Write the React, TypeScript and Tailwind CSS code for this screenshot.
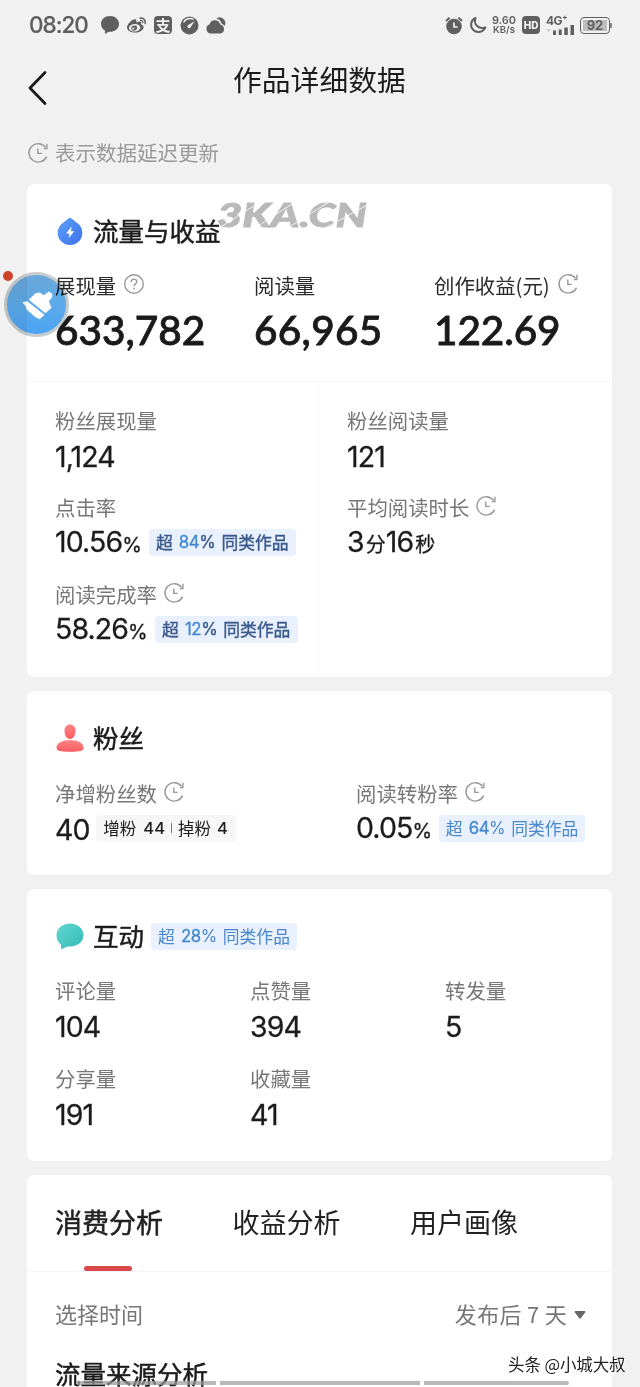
import type { ReactNode } from "react";
import { FaWeibo } from "react-icons/fa";

type Metric = {
  label: string;
  value: ReactNode;
  delayed?: boolean;
  extra?: ReactNode;
};

function DelayIcon({ className = "text-[#999]" }: { className?: string }) {
  return (
    <svg width="22" height="22" viewBox="0 0 22 22" fill="none" stroke="currentColor" strokeWidth="1.4" className={`shrink-0 ${className}`}>
      <path d="M19.6 14.6A9.2 9.2 0 1 1 18.6 5.4" />
      <path d="M19.9 1.800V6.600H16.800" />
      <path d="M10.8 6.6V11.4H14.8" />
    </svg>
  );
}

function HelpIcon() {
  return (
    <svg width="22" height="22" viewBox="0 0 22 22" fill="none" stroke="#999" strokeWidth="1.4" className="shrink-0">
      <circle cx="11" cy="11" r="9.3" />
      <path d="M8.2 8.9C8.2 5.2 13.8 5.3 13.8 8.7C13.8 10.8 11 10.9 11 13.2" />
      <path d="M11 14.8V16.4" />
    </svg>
  );
}

function StatusBar() {
  return (
    <div className="flex h-[50px] items-center pl-[29px] pr-[28px] text-[#5f5f5f]">
      <span className="w-[71px] text-[22.5px] leading-none tracking-[-1px] font-['Inter',sans-serif] font-medium [-webkit-text-stroke:0.200px]">08:20</span>
      <svg width="20" height="20" viewBox="0 0 20 20" fill="currentColor">
        <path d="M10 1C4.8 1 1 4.4 1 9c0 3 1.6 5.4 4.2 6.8L4.8 19l4-2.2c5.600.4 10.200-2.900 10.200-7.800C19 4.400 15.200 1 10 1z" />
      </svg>
      <FaWeibo className="ml-[7px] h-[19px] w-[19px]" />
      <span className="ml-[8px] flex h-[18px] w-[18px] items-center justify-center rounded-[4px] bg-[#5f5f5f] pb-[2px] text-[15px] font-bold leading-none text-[#f1f1f1]">支</span>
      <svg width="19" height="19" viewBox="0 0 19 19" className="ml-[8px]">
        <circle cx="9.500" cy="9.500" r="9" fill="currentColor" />
        <path d="M3.500 6.500A7 7 0 0 1 13.500 3.500" stroke="#f1f1f1" strokeWidth="1.400" fill="none" />
        <path d="M14.600 5.200L10.600 11.200A1.700 1.700 0 1 1 8.300 9z" fill="#f1f1f1" />
      </svg>
      <svg width="20" height="19" viewBox="0 0 20 19" fill="currentColor" className="ml-[7px]">
        <path d="M10.500 2.500A5.500 5.500 0 0 1 17.500 3A5 5 0 0 1 18.300 10A6 6 0 0 0 15.500 7.500A6.500 6.500 0 0 0 10.500 2.500z" />
        <path d="M5 17.500A4.800 4.800 0 0 1 3.600 8.200A5.500 5.500 0 0 1 14.200 8.500A4.700 4.700 0 0 1 15 17.500z" />
      </svg>

      <svg width="18" height="19" viewBox="0 0 18 19" className="ml-auto">
        <circle cx="9" cy="10.500" r="7.800" fill="currentColor" />
        <path d="M1 5L4.600 1.700M17 5L13.400 1.700" stroke="currentColor" strokeWidth="2" />
        <path d="M9 6.500V11H12.600" stroke="#f1f1f1" strokeWidth="1.700" fill="none" />
      </svg>
      <svg width="18" height="18" viewBox="0 0 18 18" fill="none" stroke="currentColor" strokeWidth="2" strokeLinejoin="round" className="ml-[6px]">
        <path d="M6.500 2A7.300 7.300 0 1 0 16.200 11.300A7.200 7.200 0 0 1 6.500 2z" />
      </svg>
      <span className="ml-[4px] flex w-[26px] flex-col items-center text-[11px] font-semibold leading-[10px] font-['Inter',sans-serif]">
        <span>9.60</span>
        <span className="text-[9.500px]">KB/s</span>
      </span>
      <span className="ml-[5px] flex h-[18px] w-[18px] items-center justify-center rounded-[4px] bg-[#5f5f5f] text-[10px] font-extrabold leading-none text-[#f1f1f1] font-['Inter',sans-serif]">HD</span>
      <span className="ml-[6px] flex h-[19px] w-[29px] flex-col">
        <span className="text-[12px] font-bold leading-[9px] tracking-[-0.5px] font-['Inter',sans-serif]">4G⁺</span>
        <svg width="29" height="11" viewBox="0 0 29 11" fill="currentColor" className="mt-[-1px]">
          <path d="M0 5h5L2.500 8z" opacity=".25" />
          <path d="M7 6.500h3v4.500H7zM12.700 5.500h3v5.500h-3zM18.300 3.500h3.500v7.500h-3.500zM24.500 1h3.500v10h-3.500z" />
        </svg>
      </span>
      <span className="ml-[5px] flex h-[17px] w-[30px] items-center justify-center rounded-[4px] border-[1.500px] border-[#5f5f5f] p-[2px]">
        <span className="flex h-full w-full items-center justify-center bg-[#bdbdbd] text-[13px] font-bold leading-none font-['Inter',sans-serif]">92</span>
      </span>
      <span className="h-[5px] w-[2px] bg-[#8a8a8a]" />
    </div>
  );
}

function Badge({ percent, className = "w-[146px]", dark = false }: { percent: string; className?: string; dark?: boolean }) {
  return (
    <span
      className={`flex h-[27px] items-center justify-center gap-[6px] whitespace-nowrap rounded-[4px] bg-[#e8f1fd] text-[16.8px] leading-none ${
        dark ? "text-[#3c5a8c] [-webkit-text-stroke:0.400px]" : "text-[#4a86cc]"
      } ${className}`}
    >
      <span>超</span>
      <span className="font-['Inter','Noto_Sans_CJK_SC',sans-serif] tracking-[-0.4px]">
        <span className="text-[#4488d0] [-webkit-text-stroke:0.300px]">{percent}</span>%
      </span>
      <span>同类作品</span>
    </span>
  );
}

function Unit({ children }: { children: ReactNode }) {
  return <span className="text-[20px] tracking-normal">{children}</span>;
}

function MetricItem({ label, value, delayed, extra }: Metric) {
  return (
    <div>
      <div className="flex h-7 items-center pb-px text-[20.4px] leading-7 text-[#777]">
        {label}
        {delayed && <DelayIcon className="mb-[2px] ml-[6px] text-[#999]" />}
      </div>
      <div className="mt-[3px] flex h-9 items-center">
        <span className="whitespace-nowrap pt-[3px] text-[28.5px] leading-9 tracking-[-0.9px] text-[#1c1c1c] font-['Inter','Noto_Sans_CJK_SC',sans-serif] [-webkit-text-stroke:0.300px]">
          {value}
        </span>
        {extra}
      </div>
    </div>
  );
}

function CardTitle({ icon, children }: { icon: ReactNode; children: ReactNode }) {
  return (
    <div className="flex h-8 items-center">
      <span className="w-[38px] pl-px">{icon}</span>
      <h2 className="pb-[2px] text-[25.5px] leading-8 text-[#1c1c1c] [-webkit-text-stroke:0.500px]">{children}</h2>
    </div>
  );
}

const headline = [
  { label: "展现量", value: "633,782", icon: <HelpIcon />, width: "w-[199px]" },
  { label: "阅读量", value: "66,965", icon: null, width: "w-[180px] tracking-[0.3px]" },
  { label: "创作收益(元)", value: "122.69", icon: <DelayIcon />, width: "w-[150px] tracking-[-0.1px]" },
];

const interactions: Metric[] = [
  { label: "评论量", value: "104" },
  { label: "点赞量", value: "394" },
  { label: "转发量", value: "5" },
  { label: "分享量", value: "191" },
  { label: "收藏量", value: "41" },
];

const tabs = ["消费分析", "收益分析", "用户画像"];

function TrafficCard() {
  return (
    <section className="h-[493px] rounded-[7px] bg-white">
      <div className="h-[198px] border-b border-[#f5f5f5] pl-[28px] pt-[31px]">
        <CardTitle
          icon={
            <svg width="28" height="30" viewBox="0 0 28 30">
              <defs>
                <linearGradient id="drop" x1="0" y1="0" x2="1" y2="1">
                  <stop offset="0" stopColor="#60a0f8" />
                  <stop offset="1" stopColor="#3a72ee" />
                </linearGradient>
              </defs>
              <path d="M12.500 2.500Q14 1.200 15.500 2.500L22.800 8.200A12.300 12.300 0 1 1 5.200 8.200z" fill="url(#drop)" />
              <path d="M15.600 10.500L10 17.500H13.300L12.700 22L18.200 15.200H15z" fill="#fff" />
            </svg>
          }
        >
          流量与收益
        </CardTitle>
        <div className="mt-[25px] flex">
          {headline.map((item) => (
            <div key={item.label} className={item.width}>
              <div className="flex h-7 items-center gap-[7px] whitespace-nowrap pb-[2px] text-[20.4px] leading-7 tracking-normal text-[#2a2a2a]">
                {item.label}
                <span className="mb-[3px]">{item.icon}</span>
              </div>
              <div className="mt-[4px] whitespace-nowrap pt-px text-[40.5px] font-medium leading-[50px] text-[#1a1a1a] font-['Lato',sans-serif] [-webkit-text-stroke:0.800px]">
                {item.value}
              </div>
            </div>
          ))}
        </div>
      </div>
      <div className="flex h-[295px] pt-[1px]">
        <div className="flex w-[292px] flex-col gap-[20px] border-r border-[#f5f5f5] pl-[28px] pt-[23px]">
          <MetricItem label="粉丝展现量" value="1,124" />
          <MetricItem label="点击率" value={<>10.56<Unit>%</Unit></>} extra={<Badge dark percent="84" className="ml-[7px] w-[147px]" />} />
          <MetricItem label="阅读完成率" delayed value={<>58.26<Unit>%</Unit></>} extra={<Badge dark percent="12" className="ml-[7px] w-[143px]" />} />
        </div>
        <div className="flex flex-col gap-[20px] pl-[28px] pt-[23px]">
          <MetricItem label="粉丝阅读量" value="121" />
          <MetricItem label="平均阅读时长" delayed value={<>3<span className="pl-[2px]"><Unit>分</Unit></span>16<span className="pl-[2px]"><Unit>秒</Unit></span></>} />
        </div>
      </div>
    </section>
  );
}

function FansCard() {
  return (
    <section className="h-[184px] rounded-[7px] bg-white pl-[28px] pt-[31px]">
      <CardTitle
        icon={
          <svg width="28" height="28" viewBox="0 0 28 28">
            <defs>
              <linearGradient id="person" x1="0" y1="0" x2="0" y2="1">
                <stop offset="0" stopColor="#ff8585" />
                <stop offset="1" stopColor="#fa5c62" />
              </linearGradient>
            </defs>
            <path d="M14 .5C17.300 .5 19.500 3 19.500 6.500C19.500 11 17.500 15 14 15S8.500 11 8.500 6.500C8.500 3 10.700 .5 14 .5z" fill="url(#person)" />
            <path d="M14 16C21.500 16 27.500 19 27.500 23.500C27.500 27 24 27.800 14 27.800S.5 27 .5 23.500C.5 19 6.500 16 14 16z" fill="url(#person)" />
          </svg>
        }
      >
        粉丝
      </CardTitle>
      <div className="mt-[25px] flex">
        <div className="w-[301px]">
          <MetricItem
            label="净增粉丝数"
            delayed
            value="40"
            extra={
              <span className="ml-[6px] flex h-[27px] w-[140px] items-center justify-center whitespace-nowrap rounded-[4px] bg-[#f7f7f7] text-[16.5px] leading-none text-[#1c1c1c]">
                增粉
                <span className="ml-[7px] font-medium font-['Inter',sans-serif]">44</span>
                <span className="mx-[6px] h-[10px] w-px bg-[#777]" />
                掉粉
                <span className="ml-[6px] font-medium font-['Inter',sans-serif]">4</span>
              </span>
            }
          />
        </div>
        <MetricItem label="阅读转粉率" delayed value={<>0.05<Unit>%</Unit></>} extra={<Badge percent="64" className="ml-[7px] w-[146px]" />} />
      </div>
    </section>
  );
}

function InteractionCard() {
  return (
    <section className="h-[272px] rounded-[7px] bg-white pl-[28px] pt-[31px]">
      <div className="flex items-center">
        <CardTitle
          icon={
            <svg width="28" height="28" viewBox="0 0 28 28">
              <defs>
                <linearGradient id="bubble" x1="0" y1="0" x2="1" y2="1">
                  <stop offset="0" stopColor="#62d8ce" />
                  <stop offset="1" stopColor="#35b9b7" />
                </linearGradient>
              </defs>
              <path d="M14 1.500C21.500 1.500 27.500 6.500 27.500 13C27.500 19.500 22 24.500 14 24.500H11.500L6 27Q5 27.300 5 26V22.500C2 20.500 .5 17.500 .5 13C.5 6.500 6.500 1.500 14 1.500z" fill="url(#bubble)" />
            </svg>
          }
        >
          互动
        </CardTitle>
        <Badge percent="28" className="ml-[7px] w-[146px]" />
      </div>
      <div className="mt-[24px] grid grid-cols-[195px_195px_195px] gap-y-[21.5px]">
        {interactions.map((item) => (
          <MetricItem key={item.label} {...item} />
        ))}
      </div>
    </section>
  );
}

function AnalysisCard() {
  return (
    <section className="h-[212px] overflow-hidden rounded-t-[7px] bg-white">
      <div className="flex h-[97px] gap-[69.5px] border-b border-[#f5f5f5] pl-[28px] text-[27px] leading-[36px] text-[#222]">
        {tabs.map((tab, index) => (
          <div key={tab} className="flex w-[108px] flex-col items-center whitespace-nowrap pt-[29px]">
            <span className={index === 0 ? "[-webkit-text-stroke:0.500px]" : ""}>{tab}</span>
            {index === 0 && <span className="mr-[2px] mt-[26px] h-[5px] w-[48px] shrink-0 rounded-full bg-[#d9474b]" />}
          </div>
        ))}
      </div>
      <div className="mt-[25px] flex h-8 items-center pl-[28px] pr-[26px] text-[22px] leading-8 text-[#777]">
        <span>选择时间</span>
        <span className="ml-auto tracking-[0.3px]">发布后 7 天</span>
        <svg width="12" height="8" viewBox="0 0 12 8" fill="#666" className="ml-[7px] mt-[3px]">
          <path d="M1.500 0H10.500Q12 0 11.200 1.300L7 7Q6 8 5 7L.8 1.300Q0 0 1.500 0z" />
        </svg>
      </div>
      <h2 className="mt-[30px] pl-[28px] text-[25.5px] leading-[27px] text-[#1c1c1c] [-webkit-text-stroke:0.500px]">流量来源分析</h2>
    </section>
  );
}

// Multiply blending keeps the numbers below the button readable
function CleanerButton() {
  return (
    <div className="absolute left-[3px] top-[271px] mix-blend-multiply">
      <span className="absolute left-0 top-0 h-[10px] w-[10px] rounded-full bg-[#d9472e]" />
      <div className="ml-[1px] mt-[1px] flex h-[65px] w-[65px] items-center justify-center rounded-full border-[3px] border-[#c9ccce] bg-gradient-to-b from-[#6aa6d8] via-[#5caaea] to-[#4ba3f2]">
        <svg width="34" height="34" viewBox="0 0 34 34" fill="#fff">
          <path d="M8.800 11.800L15.500 5.200L19.800 4.500L23.800 7.200L28.800 3.500L32.200 5.800V9.200L28.800 13.200L31.500 19.800L25.500 25.200z" />
          <path d="M2.200 14.200L7.200 13.200L24.500 26.800L19.800 31.200L15.500 29.200L6.500 21.500L5.500 18z" />
        </svg>
      </div>
    </div>
  );
}

export default function App() {
  return (
    <div className="relative h-[1387px] w-[640px] overflow-hidden bg-[#f1f1f1] font-['Noto_Sans_CJK_SC',sans-serif]">
      <StatusBar />
      <header className="flex h-[76px] items-start">
        <svg width="20" height="36" viewBox="0 0 20 36" fill="none" stroke="#1a1a1a" strokeWidth="2.800" strokeLinecap="round" strokeLinejoin="round" className="ml-[28px] mt-[20px]">
          <path d="M17 2.500L2 18L17 33.500" />
        </svg>
        <h1 className="ml-[185px] mt-[9px] text-[28.800px] leading-[40px] text-[#1c1c1c]">作品详细数据</h1>
      </header>
      <div className="mb-[17px] flex h-[41px] items-center gap-[6px] pl-[27px] pt-[12px] text-[20.500px] leading-7 text-[#999]">
        <DelayIcon />
        <span className="pb-[2px]">表示数据延迟更新</span>
      </div>
      <main className="ml-[27px] flex w-[585px] flex-col gap-[14px]">
        <TrafficCard />
        <FansCard />
        <InteractionCard />
        <AnalysisCard />
      </main>

      <div className="absolute left-[213px] top-[193px]">
        <svg width="176" height="44" viewBox="0 0 176 44">
          <text x="4" y="33.500" fontSize="32" fontWeight="900" fontStyle="italic" fontFamily="Lato, Inter, sans-serif" textLength="150" lengthAdjust="spacingAndGlyphs" fill="#b9b9b9" stroke="#b9b9b9" strokeWidth=".8">
            3KA.CN
          </text>
          <path d="M6 35L44 11M42 35L82 9M76 34L116 9M112 35L160 9" stroke="#fff" strokeWidth="1" opacity=".8" />
        </svg>
      </div>
      <CleanerButton />
      <div className="absolute bottom-[2px] left-[77px] flex gap-[4px] opacity-70">
        <span className="h-[4px] w-[139px] bg-[#9c9c9c]" />
        <span className="h-[4px] w-[200px] bg-[#9c9c9c]" />
        <span className="h-[4px] w-[145px] rounded-r-sm bg-[#9c9c9c]" />
      </div>
      <div className="absolute left-[508px] top-[1352px] whitespace-nowrap text-[16.500px] leading-6 tracking-[-0.1px] text-[#222] [text-shadow:1px_1px_0_#fff]">
        头条 @小城大叔
      </div>
    </div>
  );
}
